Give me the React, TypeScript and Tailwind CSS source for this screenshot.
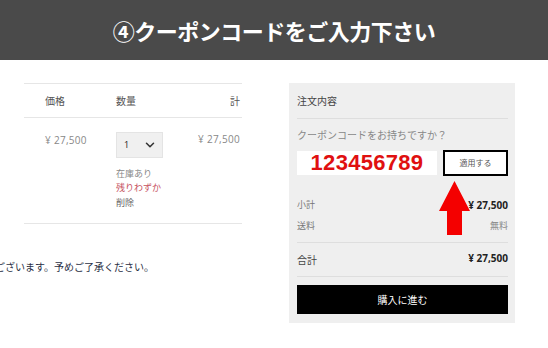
import {ChevronDown} from 'lucide-react';

const jp = {fontFamily: '"Noto Sans CJK JP", "Noto Sans", sans-serif'};

const App = () => {
  return (
    <div className="w-[548px] h-[348px] overflow-hidden bg-white text-[#444]" style={jp}>
      {/* title bar */}
      <div className="h-[60px] bg-[#4a4a4a] flex items-center justify-center">
        <h1 className="text-white text-[22px] font-bold tracking-[-0.5px] leading-none">④クーポンコードをご入力下さい</h1>
      </div>

      <div className="flex pt-[23px]">
        {/* cart table */}
        <div className="w-[289px] shrink-0">
          <div className="ml-[24px] w-[218px]">
            <div className="border-t border-[#e6e6e6] h-[34px] flex items-center text-[10px] text-[#555]">
              <span className="w-[92px] pl-[21px]">価格</span>
              <span className="flex-1">数量</span>
              <span className="pr-[2px]">計</span>
            </div>
            <div className="border-t border-b border-[#e6e6e6] h-[107px] flex pt-[14px] text-[10px]">
              <span className="w-[92px] pl-[21px] pt-[1px] text-[#888] tracking-[0.3px]" style={{fontFamily: '"Open Sans", sans-serif'}}>¥ 27,500</span>
              <div className="flex-1 flex flex-col">
                <div className="w-[47px] h-[26px] bg-[#f0f0f0] border border-[#e4e4e4] flex items-center justify-between pl-[7px] pr-[5px]">
                  <span className="text-[9px] text-[#222]" style={{fontFamily: '"Open Sans", sans-serif'}}>1</span>
                  <ChevronDown size={14} strokeWidth={2.6} color="#333" />
                </div>
                <span className="mt-[9px] leading-[14px] text-[9px] text-[#888]">在庫あり</span>
                <span className="leading-[14px] text-[9px] text-[#c6505e]">残りわずか</span>
                <span className="mt-[1px] leading-[14px] text-[9px] text-[#666]">削除</span>
              </div>
              <span className="pr-[2px] text-[#888] tracking-[0.3px]" style={{fontFamily: '"Open Sans", sans-serif'}}>¥ 27,500</span>
            </div>
          </div>
          <p className="mt-[35px] ml-[-5px] text-[10px] text-[#2a2f45] whitespace-nowrap">ございます。予めご了承ください。</p>
        </div>

        {/* order summary */}
        <div className="w-[226px] h-[240px] bg-[#efefef] pl-[8px] pr-[7px]">
          <div className="h-[36px] flex items-center border-b border-[#dedede] text-[10px] text-[#444]">注文内容</div>
          <p className="mt-[9px] leading-[14px] text-[10px] text-[#888]">クーポンコードをお持ちですか？</p>
          <div className="relative mt-[8px] flex items-center justify-between h-[26px]">
            <div className="w-[140px] h-[24px] bg-white flex items-center justify-center">
              <span className="text-[#e01010] text-[22px] font-bold leading-none tracking-[0.3px]" style={{fontFamily: '"Liberation Sans", Arial, sans-serif'}}>123456789</span>
            </div>
            <div className="w-[65px] h-[26px] border-2 border-black bg-white flex items-center justify-center text-[8px] text-[#555]">適用する</div>
            <svg className="absolute left-[142px] top-[31px]" width="31" height="54" viewBox="0 0 31 54">
              <path d="M15.5 0 L31 30 L23 30 L23 54 L8 54 L8 30 L0 30 Z" fill="#f40000" />
            </svg>
          </div>
          <div className="mt-[22px] flex justify-between items-center h-[14px]">
            <span className="text-[9px] text-[#777]">小計</span>
            <span className="text-[10px] font-bold text-[#222]" style={{fontFamily: '"Open Sans", sans-serif'}}>¥ 27,500</span>
          </div>
          <div className="mt-[7px] flex justify-between items-center h-[14px]">
            <span className="text-[9px] text-[#777]">送料</span>
            <span className="text-[9px] text-[#888]">無料</span>
          </div>
          <div className="mt-[9px] border-t border-b border-[#dedede] h-[35px] flex justify-between items-center">
            <span className="text-[10px] text-[#444]">合計</span>
            <span className="text-[10px] font-bold text-[#222] -mt-[3px]" style={{fontFamily: '"Open Sans", sans-serif'}}>¥ 27,500</span>
          </div>
          <button className="mt-[8px] w-full h-[29px] bg-black text-white text-[10px] flex items-center justify-center">購入に進む</button>
        </div>
      </div>
    </div>
  );
};

export default App;
